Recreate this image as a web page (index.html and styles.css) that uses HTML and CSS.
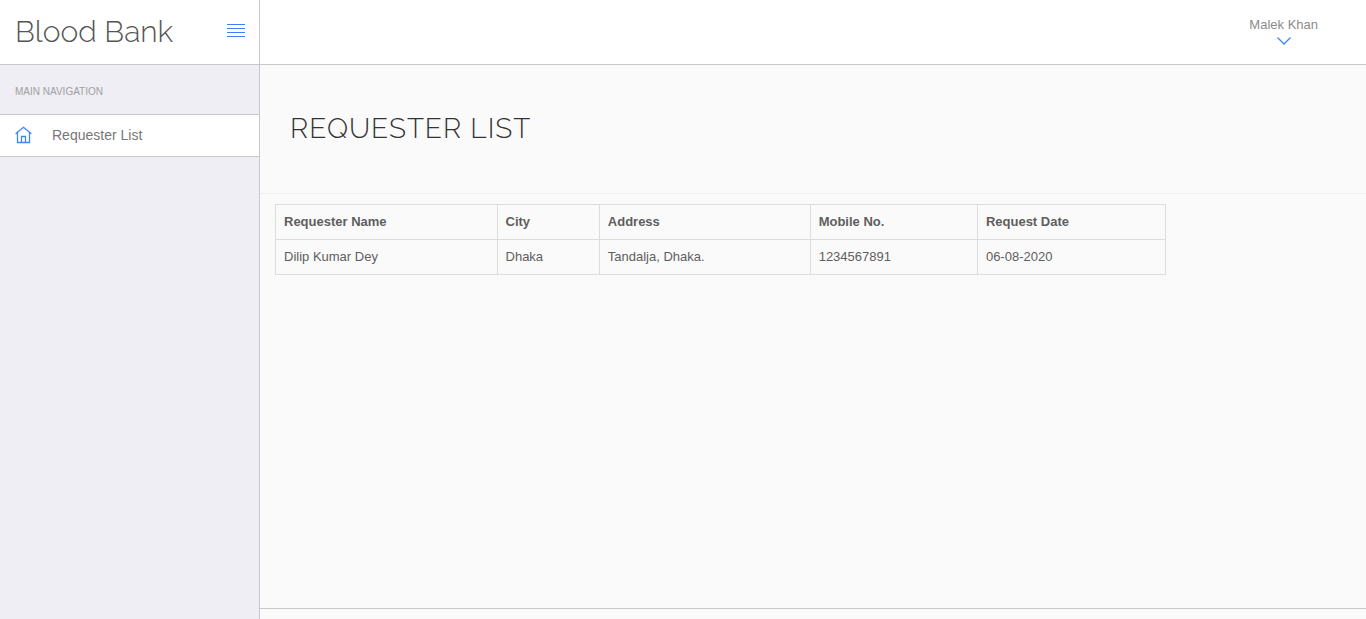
FILE: index.html
```html
<!DOCTYPE html>
<html lang="en">
<head>
<meta charset="utf-8">
<title>Blood Bank</title>
<link rel="stylesheet" href="styles.css">
</head>
<body>
<div class="app">
  <aside class="sidebar">
    <div class="brand">
      <a class="brand-name" href="#">Blood Bank</a>
      <button class="menu-toggle" type="button" aria-label="Toggle navigation">
        <svg width="18" height="14" viewBox="0 0 18 14" fill="#3f7ff5"><path d="M0 0h18v1H0zM0 4h18v1H0zM0 8h18v1H0zM0 12h18v1H0z"/></svg>
      </button>
    </div>
    <nav>
      <h2 class="nav-title">MAIN NAVIGATION</h2>
      <a class="nav-item" href="#">
        <svg width="18" height="18" viewBox="0 0 18 18" fill="none" stroke="#3f86fb" stroke-width="1.3"><path d="M.6 7.800 8.500 1.300l7.900 6.500M2.500 6.500v10h12v-10M6.500 16.500v-6h4v6"/></svg>
        <span>Requester List</span>
      </a>
    </nav>
  </aside>
  <div class="page">
    <header class="topbar">
      <button class="user" type="button">
        <span>Malek Khan</span>
        <svg width="14" height="8" viewBox="0 0 14 8" fill="none" stroke="#3f86fb" stroke-width="1.3"><path d="m.5.5 6.500 6.500 6.500-6.500"/></svg>
      </button>
    </header>
    <main class="content">
      <div class="page-head"><h1>REQUESTER LIST</h1></div>
      <div class="table-wrap">
        <table>
          <colgroup><col class="c-name"><col class="c-city"><col class="c-address"><col class="c-mobile"><col class="c-date"></colgroup>
          <thead>
            <tr><th scope="col">Requester Name</th><th scope="col">City</th><th scope="col">Address</th><th scope="col">Mobile No.</th><th scope="col">Request Date</th></tr>
          </thead>
          <tbody>
            <tr><td>Dilip Kumar Dey</td><td>Dhaka</td><td>Tandalja, Dhaka.</td><td>1234567891</td><td>06-08-2020</td></tr>
          </tbody>
        </table>
      </div>
    </main>
    <footer class="footer"></footer>
  </div>
</div>
</body>
</html>
```
FILE: styles.css
```css
* { box-sizing: border-box; }
body {
  margin: 0;
  background: #fafafa;
  color: #5e5e5e;
  font: 13px/18px "Liberation Sans", Arial, sans-serif;
}
a { color: inherit; text-decoration: none; }
button { border: 0; padding: 0; background: none; font: inherit; cursor: pointer; }
svg { display: block; }

.app { display: flex; min-height: 100vh; }
.sidebar {
  flex: 0 0 260px;
  background: #efeef4;
  border-right: 1px solid #c8c7cc;
}
.brand {
  display: flex;
  align-items: flex-start;
  justify-content: space-between;
  height: 65px;
  padding: 12px 14px 0 15px;
  background: #fff;
  border-bottom: 1px solid #c8c7cc;
}
.menu-toggle { padding: 12px 0; }
.brand-name {
  font: 300 30px/40px Raleway, Lato, sans-serif;
  color: #555;
}
.nav-title {
  margin: 0;
  padding: 18px 15px 13px;
  font-size: 10px;
  line-height: 18px;
  font-weight: 400;
  color: #a0a0a0;
}
.nav-item {
  display: flex;
  align-items: center;
  gap: 19px;
  height: 43px;
  padding: 0 15px 2px;
  background: #fff;
  border: solid #c8c7cc;
  border-width: 1px 0;
  font-size: 14px;
  color: #777;
}

.page { flex: 1; display: flex; flex-direction: column; min-width: 0; }
.topbar {
  display: flex;
  justify-content: flex-end;
  align-items: flex-start;
  height: 65px;
  padding: 16px 48px 0;
  background: #fff;
  border-bottom: 1px solid #c8c7cc;
}
.user {
  display: flex;
  flex-direction: column;
  align-items: center;
  gap: 3px;
  color: #8b8b8b;
}
.content { flex: 1; }
.page-head { padding: 44px 30px; border-bottom: 1px solid #eee; }
h1 {
  margin: 0;
  font: 300 28px/40px Raleway, Lato, sans-serif;
  letter-spacing: 1px;
  color: #333;
}
.table-wrap { width: 83.333%; padding: 10px 16px 10px 15px; }
table { width: 100%; table-layout: fixed; border-collapse: collapse; }
th, td {
  padding: 8px;
  border: 1px solid #ddd;
  text-align: left;
}
.c-name { width: 24.9%; }
.c-city { width: 11.5%; }
.c-address { width: 23.7%; }
.c-mobile { width: 18.8%; }
.c-date { width: 21.1%; }
.footer { height: 11px; border-top: 1px solid #c8c7cc; }
```
